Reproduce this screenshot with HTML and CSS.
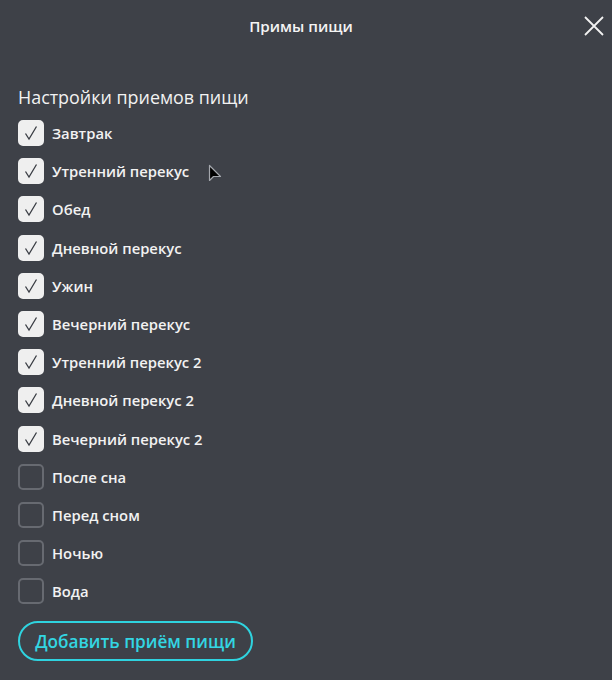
FILE: index.html
```html
<!DOCTYPE html>
<html lang="ru">
<head>
<meta charset="utf-8">
<link rel="stylesheet" href="styles.css">
</head>
<body>
<div class="modal">
  <header class="header">
    <h1 class="title">Примы пищи</h1>
    <button class="close" aria-label="Закрыть">
      <svg width="22" height="22" viewBox="0 0 22 22"><path d="M2 2L20 20M20 2L2 20" stroke="#f2f2f2" stroke-width="1.8" fill="none"/></svg>
    </button>
  </header>
  <main class="content">
    <h2 class="heading">Настройки приемов пищи</h2>
    <ul class="list">
      <li class="row"><span class="box checked"><svg class="tick" viewBox="0 0 26 26"><path d="M7.5 13.5L11 19L18.5 6.5"/></svg></span><span class="label">Завтрак</span></li>
      <li class="row"><span class="box checked"><svg class="tick" viewBox="0 0 26 26"><path d="M7.5 13.5L11 19L18.5 6.5"/></svg></span><span class="label">Утренний перекус</span></li>
      <li class="row"><span class="box checked"><svg class="tick" viewBox="0 0 26 26"><path d="M7.5 13.5L11 19L18.5 6.5"/></svg></span><span class="label">Обед</span></li>
      <li class="row"><span class="box checked"><svg class="tick" viewBox="0 0 26 26"><path d="M7.5 13.5L11 19L18.5 6.5"/></svg></span><span class="label">Дневной перекус</span></li>
      <li class="row"><span class="box checked"><svg class="tick" viewBox="0 0 26 26"><path d="M7.5 13.5L11 19L18.5 6.5"/></svg></span><span class="label">Ужин</span></li>
      <li class="row"><span class="box checked"><svg class="tick" viewBox="0 0 26 26"><path d="M7.5 13.5L11 19L18.5 6.5"/></svg></span><span class="label">Вечерний перекус</span></li>
      <li class="row"><span class="box checked"><svg class="tick" viewBox="0 0 26 26"><path d="M7.5 13.5L11 19L18.5 6.5"/></svg></span><span class="label">Утренний перекус 2</span></li>
      <li class="row"><span class="box checked"><svg class="tick" viewBox="0 0 26 26"><path d="M7.5 13.5L11 19L18.5 6.5"/></svg></span><span class="label">Дневной перекус 2</span></li>
      <li class="row"><span class="box checked"><svg class="tick" viewBox="0 0 26 26"><path d="M7.5 13.5L11 19L18.5 6.5"/></svg></span><span class="label">Вечерний перекус 2</span></li>
      <li class="row"><span class="box"></span><span class="label">После сна</span></li>
      <li class="row"><span class="box"></span><span class="label">Перед сном</span></li>
      <li class="row"><span class="box"></span><span class="label">Ночью</span></li>
      <li class="row"><span class="box"></span><span class="label">Вода</span></li>
    </ul>
    <button class="add">Добавить приём пищи</button>
  </main>
  <svg class="cursor" width="14" height="20" viewBox="0 0 14 20"><path d="M1.5 1.5L1.5 16.5L5.5 12.5L12.5 12.5Z" fill="#000" stroke="#a4a7ad" stroke-width="1.2" stroke-linejoin="round"/></svg>
</div>
</body>
</html>
```
FILE: styles.css
```css
html, body {
  margin: 0;
  padding: 0;
  background: #3e4148;
}
body {
  font-family: "Open Sans", "Noto Sans", sans-serif;
  color: #f2f2f2;
  width: 612px;
  height: 680px;
  overflow: hidden;
}
.modal {
  position: relative;
  height: 680px;
}
.header {
  height: 52px;
  display: flex;
  align-items: center;
  justify-content: center;
  padding-right: 10px;
  position: relative;
}
.title {
  margin: 0;
  font-size: 15.2px;
  font-weight: 600;
  color: #f4f4f4;
  line-height: 20px;
}
.close {
  position: absolute;
  right: 7px;
  top: 15px;
  width: 22px;
  height: 22px;
  padding: 0;
  border: 0;
  background: none;
  display: flex;
}
.content {
  padding: 33px 18px 0;
}
.heading {
  margin: 0 0 11px;
  font-size: 17.9px;
  font-weight: 500;
  line-height: 24px;
  color: #f2f2f2;
}
.list {
  list-style: none;
  margin: 0;
  padding: 0;
  display: flex;
  flex-direction: column;
  gap: 12.2px;
}
.row {
  display: flex;
  align-items: center;
  height: 26px;
  gap: 8px;
}
.box {
  box-sizing: border-box;
  width: 26px;
  height: 26px;
  border-radius: 5px;
  border: 2px solid #676a71;
  flex: none;
  position: relative;
}
.box.checked {
  background: #efefef;
  border-color: #efefef;
}
.tick {
  position: absolute;
  left: -2px;
  top: -2px;
  width: 26px;
  height: 26px;
  fill: none;
  stroke: #3a3d44;
  stroke-width: 1.3;
}
.label {
  font-size: 14.8px;
  font-weight: 600;
  color: #f2f2f2;
}
.add {
  display: block;
  margin-top: 17px;
  box-sizing: border-box;
  width: 235px;
  height: 40px;
  border: 2px solid #2fd3df;
  border-radius: 20px;
  background: transparent;
  color: #33d6e2;
  font-family: "Open Sans", "Noto Sans", sans-serif;
  font-size: 17.2px;
  font-weight: 600;
  padding: 0;
}
.cursor {
  position: absolute;
  left: 208px;
  top: 164px;
}
```
